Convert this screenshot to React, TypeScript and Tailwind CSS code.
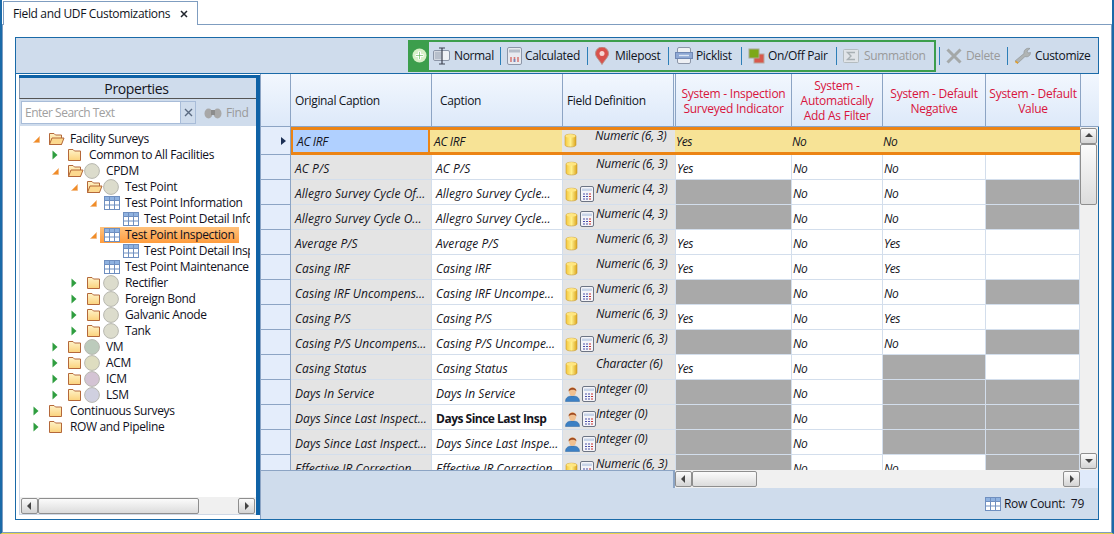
import type { ReactNode } from "react";

type Kind = "db" | "dbcalc" | "usercalc";

const rows: [string, string, Kind, string, string, string, string, string][] = [
  ["AC P/S", "AC P/S", "db", "Numeric (6, 3)", "Yes", "No", "No", ""],
  ["Allegro Survey Cycle Of...", "Allegro Survey Cycle...", "dbcalc", "Numeric (4, 3)", "#", "No", "No", "#"],
  ["Allegro Survey Cycle O...", "Allegro Survey Cycle...", "dbcalc", "Numeric (4, 3)", "#", "No", "No", "#"],
  ["Average P/S", "Average P/S", "db", "Numeric (6, 3)", "Yes", "No", "Yes", ""],
  ["Casing IRF", "Casing IRF", "db", "Numeric (6, 3)", "Yes", "No", "Yes", ""],
  ["Casing IRF Uncompens...", "Casing IRF Uncompe...", "dbcalc", "Numeric (6, 3)", "#", "No", "No", "#"],
  ["Casing P/S", "Casing P/S", "db", "Numeric (6, 3)", "Yes", "No", "Yes", ""],
  ["Casing P/S Uncompens...", "Casing P/S Uncompe...", "dbcalc", "Numeric (6, 3)", "#", "No", "No", "#"],
  ["Casing Status", "Casing Status", "db", "Character (6)", "Yes", "No", "#", ""],
  ["Days In Service", "Days In Service", "usercalc", "Integer (0)", "#", "No", "#", "#"],
  ["Days Since Last Inspect...", "Days Since Last Insp", "usercalc", "Integer (0)", "#", "No", "#", "#"],
  ["Days Since Last Inspect...", "Days Since Last Inspe...", "usercalc", "Integer (0)", "#", "No", "#", "#"],
  ["Effective IR Correction", "Effective IR Correction", "dbcalc", "Numeric (6, 3)", "#", "No", "No", "#"],
];

type TreeNode = {
  level: number;
  label: string;
  arrow?: "open" | "closed";
  folder?: "open" | "closed";
  circle?: string;
  table?: boolean;
  selected?: boolean;
};

const tree: TreeNode[] = [
  { level: 0, label: "Facility Surveys", arrow: "open", folder: "open" },
  { level: 1, label: "Common to All Facilities", arrow: "closed", folder: "closed" },
  { level: 1, label: "CPDM", arrow: "open", folder: "open", circle: "#dcdccc" },
  { level: 2, label: "Test Point", arrow: "open", folder: "open", circle: "#dcdccc" },
  { level: 3, label: "Test Point Information", arrow: "open", table: true },
  { level: 4, label: "Test Point Detail Information", table: true },
  { level: 3, label: "Test Point Inspection", arrow: "open", table: true, selected: true },
  { level: 4, label: "Test Point Detail Inspection", table: true },
  { level: 3, label: "Test Point Maintenance", table: true },
  { level: 2, label: "Rectifier", arrow: "closed", folder: "closed", circle: "#dcdccc" },
  { level: 2, label: "Foreign Bond", arrow: "closed", folder: "closed", circle: "#dcdccc" },
  { level: 2, label: "Galvanic Anode", arrow: "closed", folder: "closed", circle: "#dcdccc" },
  { level: 2, label: "Tank", arrow: "closed", folder: "closed", circle: "#dcdccc" },
  { level: 1, label: "VM", arrow: "closed", folder: "closed", circle: "#bccbbc" },
  { level: 1, label: "ACM", arrow: "closed", folder: "closed", circle: "#deddc0" },
  { level: 1, label: "ICM", arrow: "closed", folder: "closed", circle: "#d4c4d4" },
  { level: 1, label: "LSM", arrow: "closed", folder: "closed", circle: "#d0d0e0" },
  { level: 0, label: "Continuous Surveys", arrow: "closed", folder: "closed" },
  { level: 0, label: "ROW and Pipeline", arrow: "closed", folder: "closed" },
];

const treeIndent: Record<number, string> = {
  0: "pl-[8px]",
  1: "pl-[27px]",
  2: "pl-[46px]",
  3: "pl-[65px]",
  4: "pl-[84px]",
};

function Arrow({ kind }: { kind?: "open" | "closed" }) {
  return (
    <span className="flex w-[19px] shrink-0 items-center pl-[5px]">
      {kind === "open" && (
        <svg width="7" height="7" viewBox="0 0 7 7">
          <path d="M6.5 0.5V6.5H0.5Z" fill="#f08c28" stroke="#f4b478" strokeWidth="0.6" />
        </svg>
      )}
      {kind === "closed" && (
        <svg width="6" height="10" viewBox="0 0 6 10">
          <path d="M0.5 0.5L5.5 5L0.5 9.5Z" fill="#2f9e3f" />
        </svg>
      )}
    </span>
  );
}

function FolderIcon({ open }: { open?: boolean }) {
  return (
    <svg width="18" height="14" viewBox="0 0 18 14" className="shrink-0">
      <defs>
        <linearGradient id="fold" x1="0" y1="0" x2="0" y2="1">
          <stop offset="0" stopColor="#fff3c8" />
          <stop offset="1" stopColor="#fbd27c" />
        </linearGradient>
      </defs>
      <path d="M2.5 1.5H7L8.5 3H14.5V12.5H2.5Z" fill="url(#fold)" stroke="#b4683a" />
      {open && <path d="M2.5 12.5L5 6H17L14.5 12.5Z" fill="#fcd98f" stroke="#b4683a" />}
    </svg>
  );
}

function GridIcon() {
  return (
    <svg width="16" height="14" viewBox="0 0 16 14" className="shrink-0">
      <rect x="0.5" y="0.5" width="15" height="13" fill="#fff" stroke="#6f8fc0" />
      <rect x="1" y="1" width="14" height="3" fill="#8fb2e0" />
      <path d="M5.5 1V13M10.5 1V13M1 4.5H15M1 9H15" stroke="#6f8fc0" />
    </svg>
  );
}

function Circle({ color }: { color: string }) {
  return (
    <svg width="17" height="16" viewBox="0 0 17 16" className="shrink-0">
      <circle cx="8" cy="8" r="7.4" fill={color} stroke="#b8b8b0" />
    </svg>
  );
}

function DbIcon() {
  return (
    <svg width="13" height="15" viewBox="0 0 13 15" className="shrink-0">
      <defs>
        <linearGradient id="gold" x1="0" y1="0" x2="1" y2="0">
          <stop offset="0" stopColor="#f6c83c" />
          <stop offset="0.5" stopColor="#fff08c" />
          <stop offset="1" stopColor="#dca41c" />
        </linearGradient>
      </defs>
      <path d="M1 3C1 0.6 12 0.6 12 3V12C12 14.6 1 14.6 1 12Z" fill="url(#gold)" stroke="#c89a34" strokeWidth="0.6" />
      <ellipse cx="6.5" cy="3" rx="5" ry="1.7" fill="#ffe680" />
    </svg>
  );
}

function CalcIcon() {
  return (
    <svg width="14" height="16" viewBox="0 0 14 16" className="shrink-0">
      <rect x="0.5" y="0.5" width="13" height="15" rx="1.5" fill="#f4f4f8" stroke="#6c7484" />
      <rect x="2" y="2.5" width="10" height="2.5" fill="#c8d4e8" />
      <path d="M3 8H5M6 8H8M3 10.5H5M6 10.5H8M3 13H5M6 13H8" stroke="#4c50a8" strokeWidth="1.2" />
      <path d="M9 8H11M9 10.5H11M9 13H11" stroke="#c83030" strokeWidth="1.2" />
    </svg>
  );
}

function UserIcon() {
  return (
    <svg width="15" height="16" viewBox="0 0 15 16" className="shrink-0">
      <path d="M0.5 15.5C0.5 11 4 10 7.5 10S14.5 11 14.5 15.5Z" fill="#3c80c4" stroke="#2c64a0" strokeWidth="0.5" />
      <ellipse cx="7.5" cy="5.5" rx="3.6" ry="4.6" fill="#f0c090" />
      <path d="M3.6 5.5C3 0.5 12 0.5 11.4 5.5C10.5 3 5 3 3.6 5.5Z" fill="#a04c20" />
    </svg>
  );
}

function Tri({ dir }: { dir: "up" | "down" | "left" | "right" }) {
  const d = {
    up: "M1 6L5 2L9 6Z",
    down: "M1 3L5 7L9 3Z",
    left: "M6 1L2 5L6 9Z",
    right: "M3 1L7 5L3 9Z",
  }[dir];
  return (
    <svg width="10" height="10" viewBox="0 0 10 10">
      <path d={d} fill="#444" />
    </svg>
  );
}

function ScrollBtn({ dir, className }: { dir: "up" | "down" | "left" | "right"; className: string }) {
  return (
    <div
      className={`flex shrink-0 items-center justify-center rounded-[2px] border border-[#8e8e8e] bg-gradient-to-b from-[#fbfbfb] to-[#d4d4d4] ${className}`}
    >
      <Tri dir={dir} />
    </div>
  );
}

function Thumb({ className }: { className: string }) {
  return (
    <div className={`shrink-0 rounded-[2px] border border-[#8e8e8e] bg-gradient-to-b from-[#fbfbfb] to-[#dcdcdc] ${className}`} />
  );
}

function ToolItem({
  icon,
  label,
  width,
  off,
  sep = true,
}: {
  icon: ReactNode;
  label: string;
  width: string;
  off?: boolean;
  sep?: boolean;
}) {
  return (
    <>
      <div className={`flex h-full items-center ${width} ${off ? "text-[#9a9a9a]" : "text-[#10141c]"}`}>
        {icon}
        <span className="whitespace-nowrap">{label}</span>
      </div>
      {sep && <div className="mr-[6px] h-[18px] w-px shrink-0 bg-[#2d7fb8]" />}
    </>
  );
}

function Toolbar() {
  return (
    <div className="flex h-[36px] shrink-0 items-center justify-end border-b border-[#1a6aa8] bg-[#cfdcec] pr-[7px]">
      <div className="flex h-[32px] items-center border-2 border-[#3c9e4c] pr-[6px]">
        <div className="mr-[4px] flex h-full w-[19px] items-center justify-center bg-[#3c9e4c]">
          <svg width="15" height="15" viewBox="0 0 15 15">
            <circle cx="7.5" cy="7.5" r="7" fill="#d8f0c8" />
            <path d="M7.5 3.5V11.5M3.5 7.5H11.5" stroke="#fff" strokeWidth="3" />
            <path d="M7.5 4V11M4 7.5H11" stroke="#57b04c" strokeWidth="0.6" />
          </svg>
        </div>
        <ToolItem
          width="w-[67px]"
          label="Normal"
          icon={
            <svg width="18" height="18" viewBox="0 0 18 18" className="mr-[3px] shrink-0">
              <rect x="0.5" y="3.5" width="16" height="10" rx="1.5" fill="#f0f2f6" stroke="#8c96a8" />
              <rect x="1.5" y="4.5" width="7" height="8" fill="#b8c0cc" />
              <path d="M6 1H12M9 1V17M6 17H12" stroke="#3c4250" strokeWidth="1.2" fill="none" />
            </svg>
          }
        />
        <ToolItem
          width="w-[80px]"
          label="Calculated"
          icon={
            <svg width="15" height="18" viewBox="0 0 15 18" className="mr-[3px] shrink-0">
              <rect x="0.5" y="0.5" width="14" height="17" rx="1.5" fill="#e8eaf0" stroke="#8c96a8" />
              <rect x="2" y="2.5" width="11" height="3" fill="#b4bcc8" />
              <path d="M4 15V10M7.5 15V10M11 15V10" stroke="#d87c78" strokeWidth="1.6" />
              <path d="M7.5 15V12" stroke="#6c88c0" strokeWidth="1.6" />
            </svg>
          }
        />
        <ToolItem
          width="w-[74px]"
          label="Milepost"
          icon={
            <svg width="16" height="18" viewBox="0 0 16 18" className="mr-[5px] shrink-0">
              <path d="M8 17.5C5 12.5 1.5 10 1.5 6.5A6.5 6.5 0 0 1 14.5 6.5C14.5 10 11 12.5 8 17.5Z" fill="#d8524c" stroke="#b89088" />
              <circle cx="8" cy="6.5" r="2.5" fill="#f6d8d4" />
            </svg>
          }
        />
        <ToolItem
          width="w-[66px]"
          label="Picklist"
          icon={
            <svg width="18" height="17" viewBox="0 0 18 17" className="mr-[3px] shrink-0">
              <rect x="2.5" y="0.5" width="13" height="16" rx="1.5" fill="#eef0f4" stroke="#8c96a8" />
              <rect x="0.5" y="5.5" width="17" height="6" fill="#8ea8d4" stroke="#7088b4" />
              <path d="M4 8.5H14" stroke="#dce6f4" strokeWidth="1.4" />
            </svg>
          }
        />
        <ToolItem
          width="w-[88px]"
          label="On/Off Pair"
          icon={
            <svg width="17" height="16" viewBox="0 0 17 16" className="mr-[3px] shrink-0">
              <rect x="6" y="6" width="10" height="9" fill="#d8584c" stroke="#b8a8a0" />
              <rect x="1" y="1" width="10" height="9" fill="#7ca818" stroke="#a8a890" />
            </svg>
          }
        />
        <ToolItem
          width="w-[85px]"
          label="Summation"
          off
          sep={false}
          icon={
            <svg width="16" height="14" viewBox="0 0 16 14" className="mr-[5px] shrink-0">
              <rect x="0.5" y="0.5" width="15" height="13" rx="1" fill="#e0e4e8" stroke="#b4bcc0" />
              <path d="M12 3.5H4.5L8 7L4.5 10.5H12" fill="none" stroke="#a8b0b4" strokeWidth="1.4" />
            </svg>
          }
        />
      </div>
      <div className="ml-[3px] mr-[6px] h-[18px] w-px shrink-0 bg-[#2d7fb8]" />
      <ToolItem
        width="w-[61px]"
        label="Delete"
        off
        icon={
          <svg width="16" height="16" viewBox="0 0 16 16" className="mr-[4px] shrink-0">
            <path d="M1.5 1.5L14.5 14.5M14.5 1.5L1.5 14.5" stroke="#a4a8a8" strokeWidth="3" />
          </svg>
        }
      />
      <ToolItem
        width="w-[77px]"
        label="Customize"
        sep={false}
        icon={
          <svg width="18" height="17" viewBox="0 0 18 17" className="mr-[3px] shrink-0">
            <path d="M1 14L10 6.5C9.5 3 12.5 0.5 16 1.5L13 4L14 6L16.5 5.5C16.5 9 13.5 10.5 11 9.5L3.5 16.5Z" fill="#b0b4b4" stroke="#8a8e8e" strokeWidth="0.6" />
            <path d="M1.5 14.5L4 16" stroke="#e0a030" strokeWidth="2" />
          </svg>
        }
      />
    </div>
  );
}

function PropertiesPanel() {
  return (
    <div className="flex w-[244px] shrink-0 flex-col bg-white pb-[4px] pl-[3px] pt-[1px]">
      <div className="flex min-h-0 flex-1 flex-col border-t-[3px] border-r-[4px] border-[#0f62a6]">
        <div className="flex h-[21px] shrink-0 items-center justify-center border-b border-l border-b-[#555] border-l-[#8a9ab0] bg-[#cfdcec] pr-[3px] text-[14px] text-[#14141c]">
          Properties
        </div>
        <div className="flex h-[27px] shrink-0 items-center bg-[#cfdcec] pl-[2px]">
          <div className="flex h-[23px] w-[160px] items-center border border-[#a8bcd8] bg-white pl-[3px] tracking-[-0.5px] text-[#a0a0a0]">
            Enter Search Text
          </div>
          <div className="flex h-[23px] w-[15px] items-center justify-center border border-l-0 border-[#a8bcd8] text-[#5a6a80]">
            <svg width="9" height="9" viewBox="0 0 9 9">
              <path d="M1 1L8 8M8 1L1 8" stroke="#5a6a80" strokeWidth="1.4" />
            </svg>
          </div>
          <svg width="18" height="12" viewBox="0 0 18 12" className="ml-[8px] mr-[4px]">
            <ellipse cx="4.5" cy="6.5" rx="4" ry="5" fill="#a8a8a8" />
            <ellipse cx="13.5" cy="6.5" rx="4" ry="5" fill="#a8a8a8" />
            <rect x="7" y="3" width="4" height="5" fill="#8c8c8c" />
          </svg>
          <span className="text-[#9a9a9a]">Find</span>
        </div>
        <div className="flex min-h-0 flex-1 flex-col border-l border-[#cfd8e6]">
          <div className="min-h-0 w-[230px] flex-1 overflow-hidden pt-[5px]">
            {tree.map((n) => (
              <div key={n.label} className={`flex h-[16px] items-center whitespace-nowrap text-[#10101c] ${treeIndent[n.level]}`}>
                <Arrow kind={n.arrow} />
                <div className={`flex h-[16px] items-center ${n.selected ? "-ml-[4px] bg-gradient-to-b from-[#ffc27c] to-[#ff9c3c] pl-[4px] pr-[5px]" : ""}`}>
                  {n.folder && <FolderIcon open={n.folder === "open"} />}
                  {n.circle && <Circle color={n.circle} />}
                  {n.table && <GridIcon />}
                  <span className="ml-[5px]">{n.label}</span>
                </div>
              </div>
            ))}
          </div>
          <div className="flex h-[18px] shrink-0 items-center border-b border-[#cfd8e6] bg-[#f0f0f0] pl-[1px]">
            <ScrollBtn dir="left" className="h-[16px] w-[17px]" />
            <Thumb className="h-[16px] w-[161px]" />
            <div className="flex-1" />
            <ScrollBtn dir="right" className="mr-[1px] h-[16px] w-[17px]" />
          </div>
        </div>
      </div>
    </div>
  );
}

const colW = ["w-[30px]", "w-[141px]", "w-[131px]", "w-[113px]", "w-[116px]", "w-[91px]", "w-[103px]", "w-[95px]"];

function HeadCell({ w, red, children, last, double }: { w: string; red?: boolean; children?: ReactNode; last?: boolean; double?: boolean }) {
  const edge = last ? "" : double ? "border-r-[3px] border-double border-r-[#8ca4c4]" : "border-r border-r-[#8ca4c4]";
  return (
    <div
      className={`flex shrink-0 items-center justify-center border-b border-b-[#8ca4c4] bg-gradient-to-b from-[#f2f7fe] to-[#dde9f9] px-[2px] text-center leading-[15px] ${edge} ${w} ${red ? "pt-[1px] tracking-[-0.25px] text-[#d8143c]" : "text-[#10141c]"}`}
    >
      {children}
    </div>
  );
}

function ValueCell({ w, value }: { w: string; value: string }) {
  const gray = value === "#";
  return (
    <div className={`flex h-full shrink-0 items-center border-r border-b border-[#d3deec] pl-[1px] pt-[4px] italic ${w} ${gray ? "bg-[#a9a9a9]" : "bg-white"}`}>
      {gray ? "" : value}
    </div>
  );
}

function FieldIcons({ kind }: { kind: Kind }) {
  return (
    <span className="flex w-[31px] shrink-0 items-center gap-[2px]">
      {kind === "usercalc" ? <UserIcon /> : <DbIcon />}
      {kind !== "db" && <CalcIcon />}
    </span>
  );
}

function GridPanel() {
  return (
    <div className="flex min-w-0 flex-1 flex-col border-l border-[#8ca4c4]">
      <div className="flex h-[53px] shrink-0">
        <HeadCell w={colW[0]} />
        <HeadCell w={colW[1]}>
          <span className="w-full pl-[2px] text-left">Original Caption</span>
        </HeadCell>
        <HeadCell w={colW[2]}>
          <span className="w-full pl-[6px] text-left">Caption</span>
        </HeadCell>
        <HeadCell w={colW[3]} double>
          <span className="w-full pl-[2px] text-left">Field Definition</span>
        </HeadCell>
        <HeadCell w={colW[4]} red>
          System - Inspection Surveyed Indicator
        </HeadCell>
        <HeadCell w={colW[5]} red>
          System - Automatically Add As Filter
        </HeadCell>
        <HeadCell w={colW[6]} red>
          System - Default Negative
        </HeadCell>
        <HeadCell w={colW[7]} red>
          System - Default Value
        </HeadCell>
        <HeadCell w="w-[18px]" last />
      </div>
      <div className="flex min-h-0 flex-1">
        <div className="min-w-0 flex-1 overflow-hidden text-[#14141c]">
          <div className="flex h-[28px]">
            <div className={`flex shrink-0 items-center justify-end border-r border-b border-[#8ca4c4] bg-[#e4edfb] pr-[4px] ${colW[0]}`}>
              <svg width="5" height="8" viewBox="0 0 5 8">
                <path d="M0 0L5 4L0 8Z" fill="#1c3054" />
              </svg>
            </div>
            <div className="flex flex-1 border-y-[3px] border-l-[2px] border-[#ec8414]">
              <div className="flex w-[137px] shrink-0 items-center border-r-[2px] border-[#ec8414] bg-[#b0d0ff] pl-[4px] pt-[1px] italic">AC IRF</div>
              <div className="flex w-[132px] shrink-0 items-center bg-[#f7e396] pl-[4px] pt-[1px] italic">AC IRF</div>
              <div className="flex w-[113px] shrink-0 items-start bg-[#e4e4e4] pl-[2px]">
                <span className="mt-[3px]"><FieldIcons kind="db" /></span>
                <span className="-mt-[3px] whitespace-nowrap italic tracking-[-0.2px]">Numeric (6, 3)</span>
              </div>
              <div className="flex w-[116px] shrink-0 items-center bg-[#f7e396] pl-[1px] pt-[1px] italic">Yes</div>
              <div className="flex w-[91px] shrink-0 items-center bg-[#f7e396] pl-[1px] pt-[1px] italic">No</div>
              <div className="flex w-[103px] shrink-0 items-center bg-[#f7e396] pl-[1px] pt-[1px] italic">No</div>
              <div className="flex-1 bg-[#f7e396]" />
            </div>
          </div>
          {rows.map((r, i) => (
            <div key={i} className="flex h-[25px] overflow-hidden">
              <div className={`shrink-0 border-r border-b border-[#8ca4c4] bg-[#e4edfb] ${colW[0]}`} />
              <div className={`flex h-full shrink-0 items-center truncate border-r border-b border-[#d3deec] bg-[#e4e4e4] pl-[4px] pt-[4px] italic tracking-[0.05px] ${colW[1]}`}>{r[0]}</div>
              <div className={`flex h-full shrink-0 items-center border-r border-b border-[#d3deec] bg-white pl-[4px] pt-[4px] ${r[1] === "Days Since Last Insp" ? "font-bold tracking-[-0.5px]" : "italic tracking-[0.05px]"} ${colW[2]}`}>{r[1]}</div>
              <div className={`flex h-full shrink-0 items-start border-r border-b border-[#d3deec] bg-[#e4e4e4] pl-[2px] ${colW[3]}`}>
                <span className="mt-[6px]"><FieldIcons kind={r[2]} /></span>
                <span className="whitespace-nowrap italic tracking-[-0.2px]">{r[3]}</span>
              </div>
              <ValueCell w={colW[4]} value={r[4]} />
              <ValueCell w={colW[5]} value={r[5]} />
              <ValueCell w={colW[6]} value={r[6]} />
              <ValueCell w="flex-1" value={r[7]} />
            </div>
          ))}
        </div>
        <div className="flex w-[18px] shrink-0 flex-col bg-[#f0f0f0] py-[1px]">
          <ScrollBtn dir="up" className="h-[16px] w-[17px]" />
          <Thumb className="h-[61px] w-[17px]" />
          <div className="flex-1" />
          <ScrollBtn dir="down" className="h-[16px] w-[17px]" />
        </div>
      </div>
      <div className="flex h-[18px] shrink-0">
        <div className="w-[414px] shrink-0 border-t border-r-[2px] border-[#8ca4c4] bg-[#cfdcec]" />
        <div className="flex w-[405px] shrink-0 items-center bg-[#f0f0f0]">
          <ScrollBtn dir="left" className="h-[16px] w-[17px]" />
          <Thumb className="h-[16px] w-[65px]" />
          <div className="flex-1" />
          <ScrollBtn dir="right" className="h-[16px] w-[17px]" />
        </div>
        <div className="flex-1 bg-[#e0eafa]" />
      </div>
      <div className="flex h-[31px] shrink-0 items-center justify-end bg-[#cfdcec] pr-[14px] text-[#14141c]">
        <span className="mr-[3px]"><GridIcon /></span>
        <span className="whitespace-pre tracking-[-0.28px]">Row Count:  79</span>
      </div>
    </div>
  );
}

export default function App() {
  return (
    <div className="flex h-[534px] w-[1114px] flex-col overflow-hidden border-x-2 border-b border-x-[#1a6aa8] border-b-[#e8d44c] bg-white font-['Open_Sans',sans-serif] text-[12px] tracking-[-0.35px]">
      <div className="flex h-[25px] shrink-0 items-end border-b border-[#7f9dc0] pl-[1px]">
        <div className="-mb-px flex h-[24px] w-[195px] items-center border border-b-0 border-[#7f9dc0] bg-white pl-[9px] text-[#10141c]">
          Field and UDF Customizations
          <svg width="8" height="8" viewBox="0 0 8 8" className="ml-[10px]">
            <path d="M1 1L7 7M7 1L1 7" stroke="#20242c" strokeWidth="1.5" />
          </svg>
        </div>
      </div>
      <div className="flex min-h-0 flex-1 flex-col border-x border-b border-[#7f9dc0] pb-[12px] pl-[12px] pr-[12px] pt-[12px]">
        <div className="flex min-h-0 flex-1 flex-col border border-[#1a6aa8]">
          <Toolbar />
          <div className="flex min-h-0 flex-1">
            <PropertiesPanel />
            <GridPanel />
          </div>
        </div>
      </div>
    </div>
  );
}
